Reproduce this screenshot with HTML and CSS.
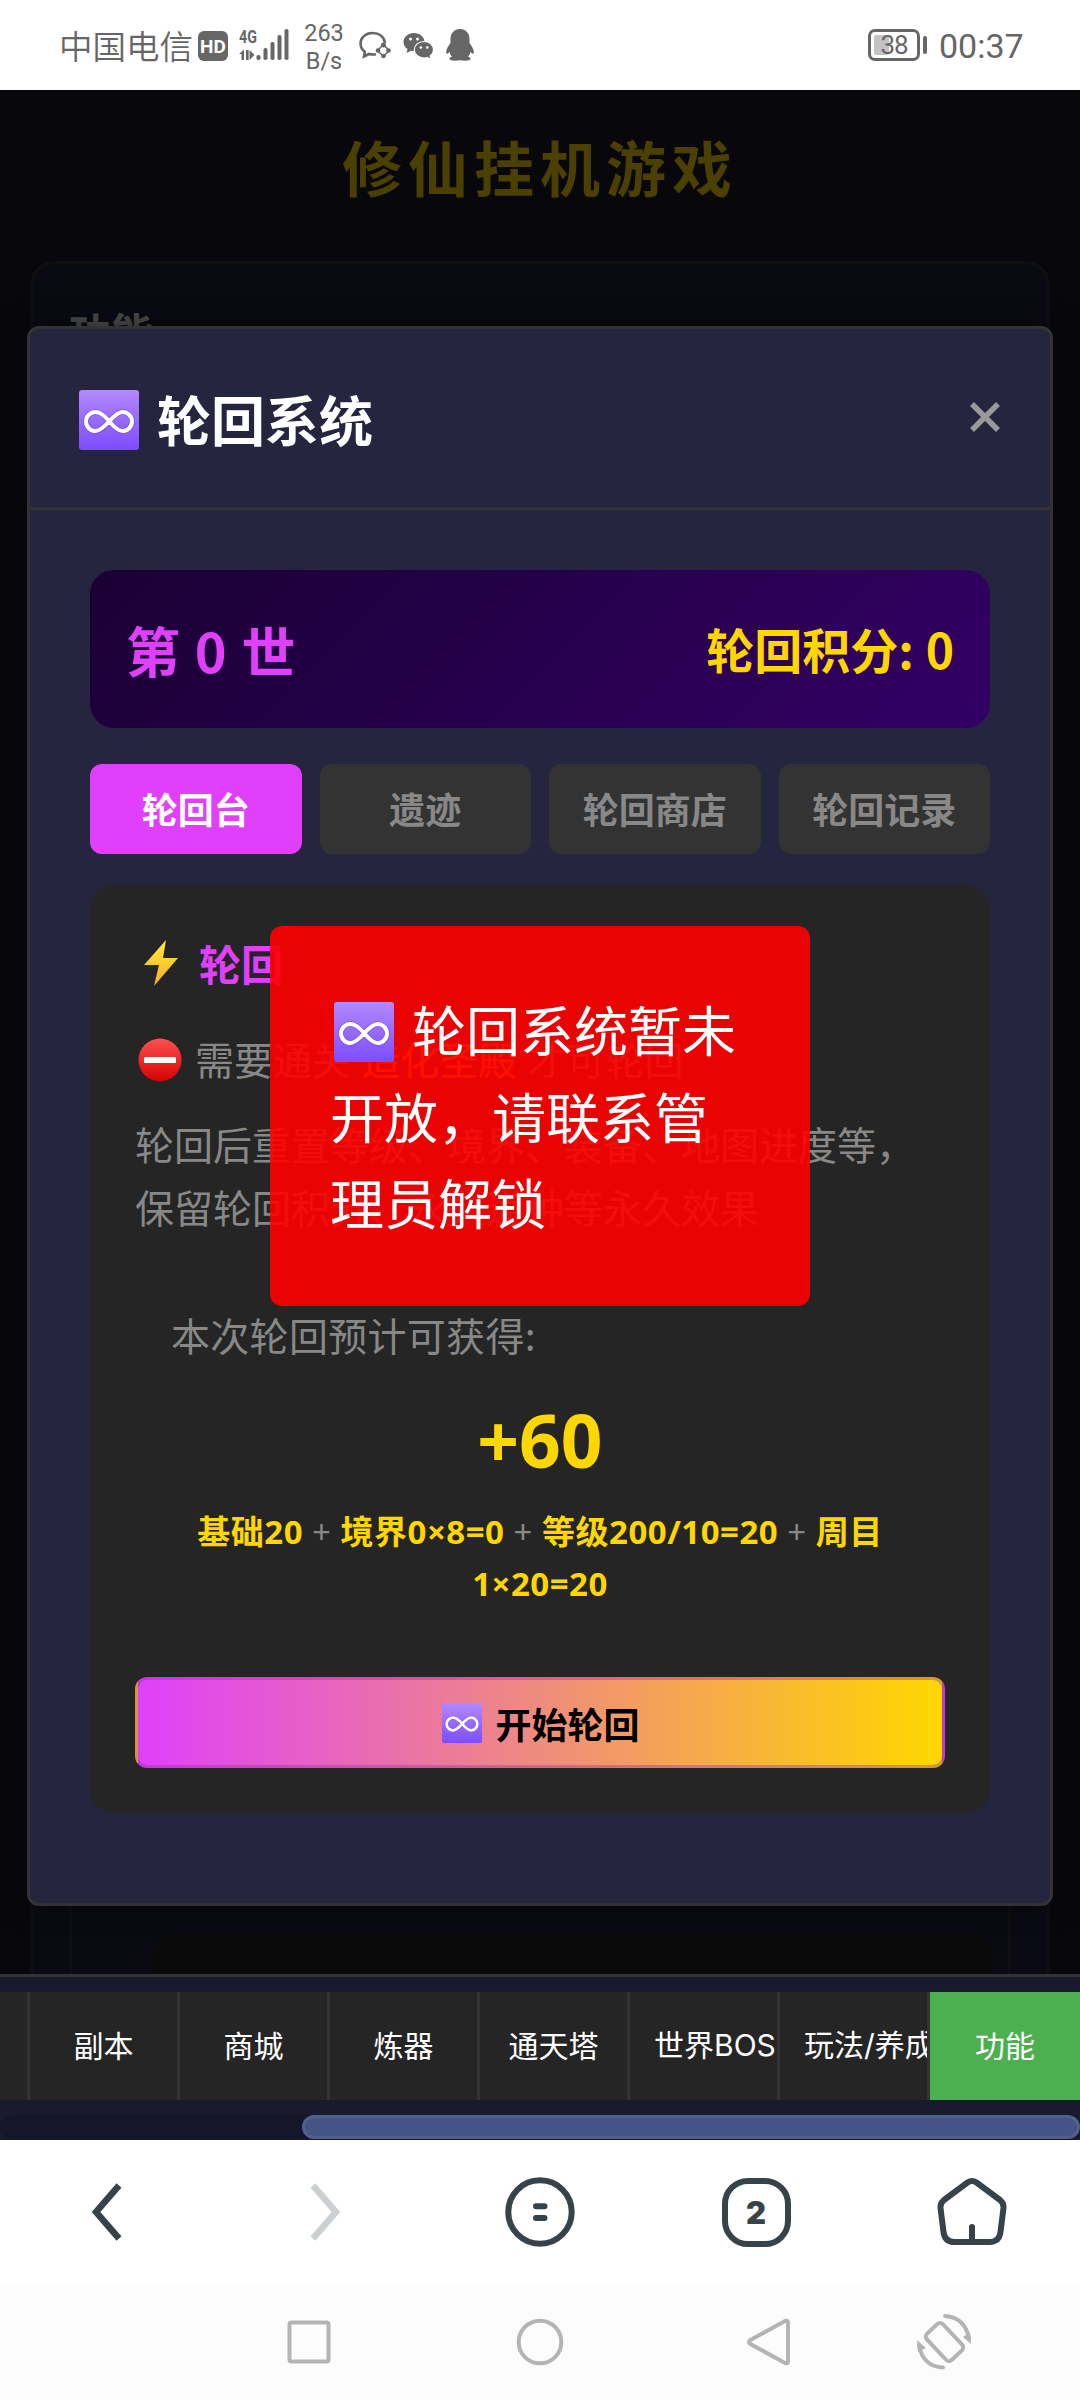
FILE: index.html
```html
<!DOCTYPE html>
<html lang="zh-CN">
<head>
<meta charset="utf-8">
<title>修仙挂机游戏</title>
<link rel="stylesheet" href="styles.css">
</head>
<body>
<svg class="defs" width="0" height="0" aria-hidden="true">
  <defs>
    <linearGradient id="violet" x1="0" y1="0" x2="0" y2="1"><stop offset="0" stop-color="#b388ff"/><stop offset="1" stop-color="#7c4dff"/></linearGradient>
    <linearGradient id="bolt" x1="0" y1="0" x2="0" y2="1"><stop offset="0" stop-color="#ffee3a"/><stop offset="1" stop-color="#fbab2c"/></linearGradient>
    <linearGradient id="stop" x1="0" y1="0" x2="0" y2="1"><stop offset="0" stop-color="#ff5252"/><stop offset="1" stop-color="#d50000"/></linearGradient>
    <symbol id="infinity" viewBox="0 0 60 60">
      <rect width="60" height="60" rx="3" fill="url(#violet)"/>
      <path d="M30 31C25 25 21 22 16.500 22a9.500 9.500 0 0 0 0 19C21 41 25 37 30 31.500S39 22 43.500 22a9.500 9.500 0 0 1 0 19C39 41 35 37 30 31z" fill="none" stroke="#5a35c0" stroke-opacity=".45" stroke-width="5.500"/>
      <path d="M30 31C25 25 21 22 16.500 22a9.500 9.500 0 0 0 0 19C21 41 25 37 30 31.500S39 22 43.500 22a9.500 9.500 0 0 1 0 19C39 41 35 37 30 31z" fill="none" stroke="#fff" stroke-width="4"/>
    </symbol>
  </defs>
</svg>
<div class="phone">
  <header class="status">
    <span class="carrier">中国电信</span>
    <span class="hd">HD</span>
    <span class="net">
      <span class="gen">4G</span>
      <svg class="signal" width="50" height="32" viewBox="0 0 50 32" fill="#666"><path d="M0 25l5-4.500V31H2.500v-6zM7 21h2.600v10H7zM10.500 21l5 5-5 5z"/><rect x="17.500" y="26" width="4" height="5" rx="1.800"/><rect x="24.500" y="19" width="4" height="12" rx="1.800"/><rect x="31.500" y="13" width="4" height="18" rx="1.800"/><rect x="38.500" y="6" width="4" height="25" rx="1.800"/><rect x="45.500" y="0" width="4" height="31" rx="1.800"/></svg>
    </span>
    <span class="speed">263<br>B/s</span>
    <svg class="bubble" width="32" height="28" viewBox="0 0 32 28"><path d="M26 12C25 5.500 20 2 13.500 2 6.500 2 1.500 6.800 1.500 12.500c0 3.500 1.800 6.300 4.300 8.200L5 25.500l5-2.500c2 .6 4.500.7 7 .3" fill="none" stroke="#666" stroke-width="2.600"/><path d="M24.500 13.500l5.500 6-5.500 6-6-6z" fill="none" stroke="#666" stroke-width="1.500"/><g fill="#666"><circle cx="24.500" cy="14" r="2.500"/><circle cx="29.500" cy="19.500" r="2.300"/><circle cx="24.500" cy="25" r="2.300"/><circle cx="19" cy="19.500" r="2.300"/></g></svg>
    <svg class="wechat" width="31" height="27" viewBox="0 0 31 27"><path d="M11 1C5 1 .5 5 .5 10c0 3 1.500 5.400 4 7l-1 4 4.500-2.300c1 .2 2 .3 3 .3 6 0 10.500-4 10.500-9S17 1 11 1z" fill="#666"/><path d="M21 9.500c-5.500 0-9.700 3.700-9.700 8.200S15.500 26 21 26c1.200 0 2.300-.2 3.300-.5l3.700 2-.8-3.500c2-1.500 3.300-3.700 3.300-6.300 0-4.500-4.200-8.200-9.500-8.200z" fill="#666" stroke="#fff" stroke-width="1.200"/><g fill="#fff"><circle cx="7.500" cy="7" r="1.500"/><circle cx="14.500" cy="7" r="1.500"/><circle cx="17.800" cy="15.500" r="1.300"/><circle cx="24.300" cy="15.500" r="1.300"/></g></svg>
    <svg class="qq" width="28" height="32" viewBox="0 0 28 32" fill="#666"><path d="M14 0c6 0 9.500 4.500 9.500 10v4c2 3 4.500 6 4.300 9.500-.1 2-1.300 1.800-3.200-.8-.5 2-1.300 3.500-2.600 4.800 1.500.6 2.500 1.400 2.500 2.500 0 2-7 2-10.500 1.200C10.500 32 3.500 32 3.500 30c0-1.100 1-1.900 2.500-2.500-1.300-1.300-2.100-2.800-2.600-4.800-1.900 2.600-3.100 2.800-3.200.8C0 20 2.500 17 4.500 14v-4C4.500 4.500 8 0 14 0z"/></svg>
    <span class="battery"><span class="level"></span><span class="pct">38</span></span>
    <span class="tip"></span>
    <span class="clock">00:37</span>
  </header>

  <section class="app">
    <main class="page">
      <h1 class="game-title">修仙挂机游戏</h1>
      <div class="card">
        <h2 class="card-title">功能</h2>
        <div class="subcard"><div class="slot"></div></div>
      </div>
      <div class="overlay">
        <div class="modal">
          <div class="modal-head">
            <svg class="ic60"><use href="#infinity"/></svg>
            <span class="modal-title">轮回系统</span>
            <svg class="close" width="30" height="30" viewBox="0 0 30 30"><path d="M2 2l26 26M28 2L2 28" stroke="#999" stroke-width="5.500"/></svg>
          </div>
          <div class="modal-body">
            <div class="score"><span class="life">第 0 世</span><span class="points">轮回积分: 0</span></div>
            <div class="tabs"><span class="tab on">轮回台</span><span class="tab">遗迹</span><span class="tab">轮回商店</span><span class="tab">轮回记录</span></div>
            <div class="panel">
              <div class="panel-title"><svg width="50" height="48" viewBox="0 0 50 48"><path d="M31 1L9 26h15l-5 21 24-28H28z" fill="url(#bolt)"/></svg>轮回</div>
              <div class="need"><svg width="44" height="44" viewBox="0 0 44 44"><circle cx="22" cy="22" r="21.500" fill="url(#stop)"/><rect x="6" y="19" width="32" height="6" rx="1" fill="#fff"/></svg><span>需要通关 <b class="place">造化圣殿</b> 才可轮回</span></div>
              <p class="desc">轮回后重置等级、境界、装备、地图进度等，<br>保留轮回积分、永久道种等永久效果</p>
              <div class="gain">
                <div class="gain-label">本次轮回预计可获得:</div>
                <div class="gain-num">+60</div>
                <div class="formula"><b>基础20</b> + <b>境界0×8=0</b> + <b>等级200/10=20</b> + <b>周目<br>1×20=20</b></div>
              </div>
              <div class="start"><svg class="ic40"><use href="#infinity"/></svg>开始轮回</div>
            </div>
          </div>
        </div>
      </div>
    </main>
    <nav class="nav">
      <div class="nav-row">
        <span class="item stub"></span><span class="item">副本</span><span class="item">商城</span><span class="item">炼器</span><span class="item">通天塔</span><span class="item long">世界BOSS</span><span class="item long">玩法/养成</span><span class="item active">功能</span>
      </div>
      <div class="track"><div class="thumb"></div></div>
    </nav>
    <div class="toast"><svg class="ic60"><use href="#infinity"/></svg><span class="toast-first">轮回系统暂未</span><br>开放，请联系管<br>理员解锁</div>
  </section>

  <div class="browser">
    <span><svg width="72" height="72" viewBox="0 0 72 72"><path d="M47 9.500L24 36l23 26.500" fill="none" stroke="#37434a" stroke-width="6.500"/></svg></span>
    <span><svg width="72" height="72" viewBox="0 0 72 72"><path d="M25 9.500L48 36 25 62.500" fill="none" stroke="#cdd0d2" stroke-width="6.500"/></svg></span>
    <span><svg width="72" height="72" viewBox="0 0 72 72" fill="none" stroke="#37434a"><circle cx="36" cy="36" r="31.700" stroke-width="6"/><path d="M32 30.300h8.500M32 42h8.500" stroke-width="6" stroke-linecap="round"/></svg></span>
    <span><b class="count">2</b></span>
    <span><svg width="72" height="72" viewBox="0 0 72 72" fill="none" stroke="#37434a" stroke-width="6"><path d="M31.500 6.500q4.500-3 9 0l23.500 17.500q4 3.200 3.500 8l-3 24q-1.300 10-11 10h-35q-9.700 0-11-10l-3-24q-.5-4.800 3.500-8z"/><path d="M36 51v13" stroke-linecap="round"/></svg></span>
  </div>
  <div class="sysnav">
    <svg width="60" height="60" viewBox="0 0 60 60"><rect x="11.500" y="9.500" width="39" height="39" rx="2" /></svg>
    <svg width="60" height="60" viewBox="0 0 60 60"><circle cx="30" cy="29" r="21.300"/></svg>
    <svg width="60" height="60" viewBox="0 0 60 60"><path d="M11 27.200Q9 29 11 30.800L46 50q3 1 3-1.500v-39Q49 7 46 8z"/></svg>
    <svg width="60" height="60" viewBox="0 0 60 60"><rect x="18.500" y="11" width="22" height="36" rx="4" transform="rotate(-43 29.500 29)"/><path d="M30 3Q50 4.500 54 25.500M28 54.500Q8 53.500 4 32.500" stroke-linecap="round"/><path d="M48 24l7-5 1 12zM11 35l-8 4-1-12z" fill="#b4b4b4" stroke="none"/></svg>
  </div>
</div>
</body>
</html>
```
FILE: styles.css
```css
* { box-sizing: border-box; }
body { margin: 0; font-family: "Noto Sans CJK SC", sans-serif; }
svg { display: block; flex: none; }
.defs { position: absolute; }
.phone { width: 1080px; height: 2400px; display: flex; flex-direction: column; overflow: hidden; }

.status { height: 90px; flex: none; background: #fff; color: #666; display: flex; align-items: center; padding: 0 58px 0 59px; }
.carrier { font-size: 33.500px; line-height: 40px; width: 139px; white-space: nowrap; font-weight: 350; }
.hd { width: 30px; height: 30px; border-radius: 6px; background: #666; color: #fff; font: 700 19px/31px Roboto, sans-serif; text-align: center; margin-top: 2px; }
.net { width: 50px; height: 32px; margin-left: 11px; position: relative; }
.gen { position: absolute; left: 0; top: -1px; font: 700 19px/18px Roboto, sans-serif; transform: scaleX(.75); transform-origin: 0 0; }
.speed { width: 42px; margin-left: 14px; font: 400 23.500px/28px Roboto, sans-serif; text-align: center; margin-top: 3px; }
.bubble { margin-left: 14px; }
.wechat { margin-left: 12px; overflow: visible; }
.qq { margin-left: 12px; }
.battery { margin-left: auto; width: 52px; height: 32px; border: 3px solid #666; border-radius: 7px; position: relative; text-align: center; font: 400 26px/27px Roboto, sans-serif; }
.level { position: absolute; left: 3px; top: 3px; width: 15px; height: 20px; background: #c4c4c4; border-radius: 2px; }
.pct { position: relative; display: block; letter-spacing: -1px; }
.tip { width: 4px; height: 18px; background: #666; border-radius: 2px; margin-left: 3px; }
.clock { margin-left: 12px; font: 400 34px/40px Roboto, sans-serif; width: 83px; white-space: nowrap; margin-top: 2px; }

.app { height: 2050px; flex: none; position: relative; display: flex; flex-direction: column; background: #08070c; }
.page { height: 1884px; flex: none; position: relative; overflow: hidden; padding: 0 30px; }
.game-title { margin: 0; height: 171px; padding: 28px 0 0; font-size: 60px; line-height: 96px; letter-spacing: 6px; text-align: center; color: #4c4000; }
.card { height: 1900px; border: 3px solid #0f0f0f; border-radius: 24px; background: #0a0a13; padding: 35px 36px; display: flex; flex-direction: column; }
.card-title { margin: 0; font-size: 42px; line-height: 64px; color: #4c4c4c; }
.subcard { flex: 1; margin-top: 30px; border: 3px solid #0f0f0f; border-radius: 18px; padding: 1538px 14px 0 81px; }
.slot { height: 300px; border-radius: 24px; background: #0a0a0a; }

.overlay { position: absolute; left: 0; top: 0; width: 1080px; height: 1884px; padding: 236px 27px 0; }
.modal { height: 1580px; border: 3px solid #333; border-radius: 12px; background: #252540; box-shadow: 0 0 30px rgba(0,0,0,.5); }
.modal-head { height: 181px; border-bottom: 3px solid #333; display: flex; align-items: center; padding: 4px 50px 0 49px; }
.ic60 { width: 60px; height: 60px; }
.modal-title { margin-left: 18px; font-size: 54px; font-weight: 700; line-height: 86px; color: #fff; padding-bottom: 3px; }
.close { margin-left: auto; margin-bottom: 6px; }
.modal-body { padding: 60px; }
.score { height: 158px; border-radius: 24px; padding: 0 36px; background: linear-gradient(135deg, #1a0033, #330066); display: flex; align-items: center; justify-content: space-between; }
.life { font-size: 54px; font-weight: 700; color: #e040fb; word-spacing: 2.500px; }
.points { font-size: 48px; font-weight: 700; color: #ffd700; padding-bottom: 2px; word-spacing: 1px; }
.tabs { margin-top: 36px; display: flex; gap: 18px; }
.tab { flex: 1; height: 90px; border-radius: 12px; background: #333; color: #888; font-size: 36px; font-weight: 700; line-height: 89px; text-align: center; }
.tab.on { background: #e040fb; color: #fff; }
.panel { margin-top: 30px; height: 929px; border-radius: 24px; background: #252525; padding: 45px; color: #888; font-size: 39px; line-height: 62.400px; }
.panel-title { height: 67px; display: flex; align-items: center; gap: 14px; font-size: 42px; font-weight: 700; line-height: 67px; color: #e040fb; }
.need { margin-top: 31px; display: flex; align-items: center; gap: 13px; padding-left: 3px; word-spacing: 1.500px; }
.need svg { margin-top: 3px; }
.place { color: #ff9800; font-weight: 400; }
.desc { margin: 23px 0 0; white-space: nowrap; }
.gain { margin-top: 30px; padding: 36px 36px 0; }
.gain-label { letter-spacing: .3px; }
.gain-num { margin-top: 16px; font-family: "Noto Sans", sans-serif; font-size: 73px; font-weight: 700; line-height: 115px; color: #ffd700; text-align: center; }
.formula { margin-top: 9px; font-size: 33px; line-height: 52.800px; text-align: center; white-space: nowrap; font-family: "Noto Sans", "Noto Sans CJK SC", sans-serif; letter-spacing: .5px; }
.formula b { color: #ffd700; }
.start { margin-top: 66px; height: 91px; border: 3px solid rgba(150,50,160,.4); border-radius: 12px; background: linear-gradient(90deg, #e040fb, #ffd700); display: flex; align-items: center; justify-content: center; gap: 13px; padding-left: 2px; color: #000; font-size: 36px; font-weight: 700; line-height: 80px; }
.ic40 { width: 40px; height: 40px; }

.nav { height: 166px; flex: none; border-top: 3px solid #333; background: #1a1a2e; padding-top: 15px; }
.nav-row { display: flex; height: 108px; }
.item { width: 150px; flex: none; border-right: 3px solid #333; background: #252525; color: #fff; font-size: 30px; line-height: 105px; text-align: center; white-space: nowrap; overflow: hidden; }
.stub { width: 30px; }
.long { text-align: left; padding-left: 24px; font-family: Inter, "Noto Sans CJK SC", sans-serif; line-height: 107px; }
.active { border: 0; background: #4caf50; }
.track { margin-top: 15px; height: 24px; border-radius: 12px; background: #16162a; padding-left: 302px; }
.thumb { height: 24px; border: 3px solid #52608f; border-radius: 12px; background: #455385; }

.toast { position: absolute; left: 270px; top: 836.400px; width: 540px; padding: 60px; border-radius: 12px; background: rgba(255,0,0,.9); color: #fff; font-size: 54px; line-height: 86.400px; white-space: nowrap; }
.toast .ic60 { display: inline-block; vertical-align: -10px; margin: 0 18px 0 4px; }

.browser { height: 144px; flex: none; background: #fff; display: grid; grid-template-columns: repeat(5, 1fr); align-items: center; justify-items: center; }
.count { display: block; width: 69px; height: 69px; border: 6px solid #37434a; border-radius: 26px; font: 900 31px/57px Inter, sans-serif; text-align: center; color: #37434a; }
.sysnav { flex: 1; background: #fcfcfc; display: flex; padding: 29px 0 0 278px; }
.sysnav svg { fill: none; stroke: #b4b4b4; stroke-width: 4; }
.sysnav svg + svg { margin-left: 172px; }
.sysnav svg:nth-child(3) { margin-left: 169px; }
.sysnav svg:nth-child(4) { margin-left: 116px; }
```
